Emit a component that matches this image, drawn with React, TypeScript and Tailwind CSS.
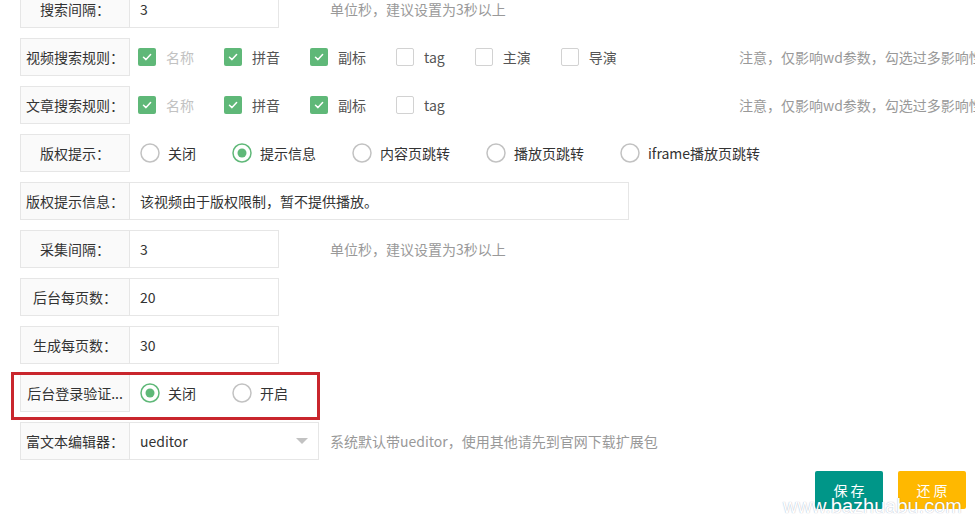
import React from 'react'

const FONT = { fontFamily: '"Noto Sans CJK SC", "Microsoft YaHei", sans-serif' }

function Label({ text }: { text: string }) {
  return (
    <div className="w-[110px] h-[38px] shrink-0 border border-[#e6e6e6] bg-[#fafafa] px-[5px] text-[14px] leading-[36px] text-[#333] text-center whitespace-nowrap overflow-hidden">
      {text}
    </div>
  )
}

function TextInput({ value, wide }: { value: string; wide?: boolean }) {
  return (
    <div className={`${wide ? 'w-[499px]' : 'w-[149px]'} h-[38px] border border-l-0 border-[#e6e6e6] bg-white pl-[10px] text-[14px] leading-[36px] text-[#333]`}>
      {value}
    </div>
  )
}

function Hint({ text }: { text: string }) {
  return <div className="text-[14px] text-[#999] whitespace-nowrap">{text}</div>
}

function Checkbox({ label, checked, dim }: { label: string; checked?: boolean; dim?: boolean }) {
  return (
    <div className="flex items-center mr-[30px] shrink-0">
      {checked ? (
        <span className="w-[18px] h-[18px] rounded-[2px] bg-[#5FB878] flex items-center justify-center">
          <svg width="12" height="12" viewBox="0 0 12 12" fill="none">
            <path d="M2.5 6.2 L5 8.6 L9.6 3.6" stroke="white" strokeWidth="1.5" strokeLinecap="round" strokeLinejoin="round" />
          </svg>
        </span>
      ) : (
        <span className="w-[18px] h-[18px] rounded-[2px] border border-[#d2d2d2] bg-white" />
      )}
      <span className={`ml-[10px] text-[14px] ${dim ? 'text-[#c2c2c2]' : 'text-[#555]'}`}>{label}</span>
    </div>
  )
}

function Radio({ label, checked }: { label: string; checked?: boolean }) {
  return (
    <div className="flex items-center mr-[36px] shrink-0">
      <svg width="20" height="20" viewBox="0 0 20 20" fill="none">
        <circle cx="10" cy="10" r="9" stroke={checked ? '#5FB878' : '#c2c2c2'} strokeWidth="1.5" />
        {checked && <circle cx="10" cy="10" r="4.5" fill="#5FB878" />}
      </svg>
      <span className="ml-[8px] text-[14px] text-[#333]">{label}</span>
    </div>
  )
}

const NOTE = '注意，仅影响wd参数，勾选过多影响性'

export default function App() {
  return (
    <div className="relative w-[975px] h-[519px] overflow-hidden bg-white" style={FONT}>
      <div className="flex flex-col gap-[10px] pl-[20px] -mt-[10px]">
        <div className="flex items-center h-[38px]">
          <Label text="搜索间隔：" />
          <TextInput value="3" />
          <div className="ml-[51px]"><Hint text="单位秒，建议设置为3秒以上" /></div>
        </div>

        <div className="flex items-center h-[38px]">
          <Label text="视频搜索规则：" />
          <div className="w-[609px] shrink-0 flex items-center pl-[8px]">
            <Checkbox label="名称" checked dim />
            <Checkbox label="拼音" checked />
            <Checkbox label="副标" checked />
            <Checkbox label="tag" />
            <Checkbox label="主演" />
            <Checkbox label="导演" />
          </div>
          <Hint text={NOTE} />
        </div>

        <div className="flex items-center h-[38px]">
          <Label text="文章搜索规则：" />
          <div className="w-[609px] shrink-0 flex items-center pl-[8px]">
            <Checkbox label="名称" checked dim />
            <Checkbox label="拼音" checked />
            <Checkbox label="副标" checked />
            <Checkbox label="tag" />
          </div>
          <Hint text={NOTE} />
        </div>

        <div className="flex items-center h-[38px]">
          <Label text="版权提示：" />
          <div className="flex items-center pl-[10px]">
            <Radio label="关闭" />
            <Radio label="提示信息" checked />
            <Radio label="内容页跳转" />
            <Radio label="播放页跳转" />
            <Radio label="iframe播放页跳转" />
          </div>
        </div>

        <div className="flex items-center h-[38px]">
          <Label text="版权提示信息：" />
          <TextInput value="该视频由于版权限制，暂不提供播放。" wide />
        </div>

        <div className="flex items-center h-[38px]">
          <Label text="采集间隔：" />
          <TextInput value="3" />
          <div className="ml-[51px]"><Hint text="单位秒，建议设置为3秒以上" /></div>
        </div>

        <div className="flex items-center h-[38px]">
          <Label text="后台每页数：" />
          <TextInput value="20" />
        </div>

        <div className="flex items-center h-[38px]">
          <Label text="生成每页数：" />
          <TextInput value="30" />
        </div>

        <div className="relative flex items-center h-[38px]">
          <Label text="后台登录验证..." />
          <div className="flex items-center pl-[10px]">
            <Radio label="关闭" checked />
            <Radio label="开启" />
          </div>
          {/* annotation box */}
          <div className="absolute -left-[9px] -top-[2px] w-[309px] h-[48px] border-[3px] border-[#c9262d] pointer-events-none" />
        </div>

        <div className="flex items-center h-[38px]">
          <Label text="富文本编辑器：" />
          <div className="w-[189px] h-[38px] border border-l-0 border-[#e6e6e6] bg-white pl-[10px] pr-[10px] flex items-center justify-between text-[14px] text-[#333]">
            <span>ueditor</span>
            <span className="w-0 h-0 border-x-[6px] border-x-transparent border-t-[6px] border-t-[#c2c2c2]" />
          </div>
          <div className="ml-[11px]"><Hint text="系统默认带ueditor，使用其他请先到官网下载扩展包" /></div>
        </div>

        <div className="flex justify-start pl-[795px] gap-[15px] mt-[1px]">
          <button className="w-[68px] h-[38px] rounded-[2px] bg-[#009688] text-white text-[14px]">保 存</button>
          <button className="w-[68px] h-[38px] rounded-[2px] bg-[#FFB800] text-white text-[14px]">还 原</button>
        </div>
      </div>

      <span
        className="absolute right-[13px] bottom-[3px] text-[20px] leading-none text-white whitespace-nowrap [text-shadow:0_0_1px_rgba(30,50,110,0.45)]"
        style={{ fontFamily: '"Liberation Sans", Arial, sans-serif' }}
      >
        www.bazhuabu.com
      </span>
    </div>
  )
}
